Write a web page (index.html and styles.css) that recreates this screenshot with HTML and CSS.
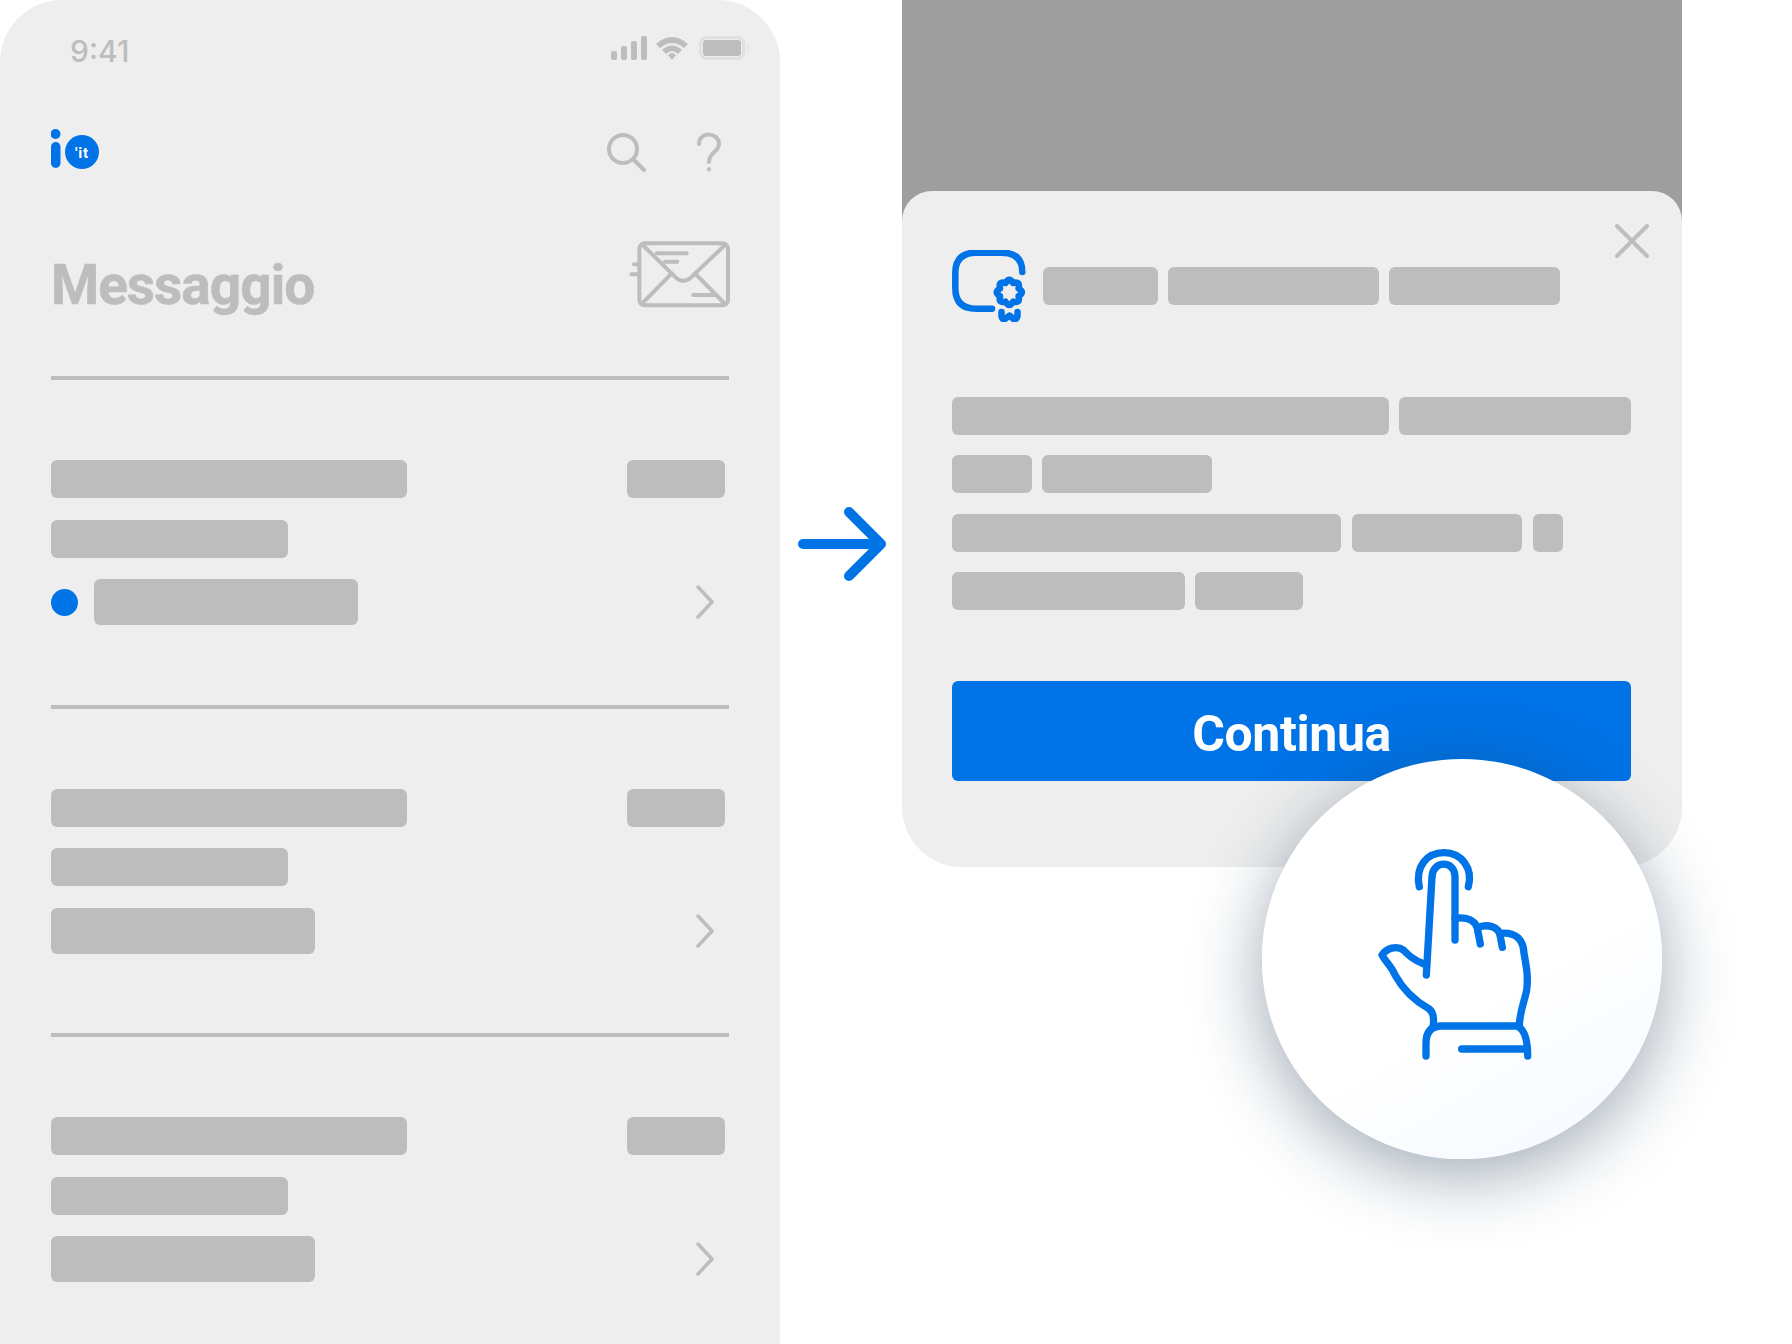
FILE: index.html
```html
<!DOCTYPE html>
<html lang="en">
<head>
    <meta charset="UTF-8">
    <meta name="viewport" content="width=device-width, initial-scale=1.0">
    <title>Messaggio</title>
    <link rel="stylesheet" href="styles.css">
</head>
<body>
    <div class="stage">
        <section class="phone">
            <div class="status-bar">
                <span class="time">9:41</span>
                <svg class="status-icons" viewBox="0 0 140 24" width="140" height="24">
                    <g fill="#bdbdbd">
                        <rect x="1" y="15" width="6" height="9" rx="2"/>
                        <rect x="11" y="10" width="6" height="14" rx="2"/>
                        <rect x="21" y="5" width="6" height="19" rx="2"/>
                        <rect x="31" y="0" width="6" height="24" rx="2"/>
                        <path d="M46 8 Q62 -6 78 8 L74 12 Q62 2 50 12 Z"/>
                        <path d="M52 14 Q62 5 72 14 L68 18 Q62 12 56 18 Z"/>
                        <path d="M58 19 Q62 15 66 19 L62 24 Z"/>
                        <rect x="93" y="4" width="38" height="16" rx="3"/>
                    </g>
                    <path d="M137 8 Q140 12 137 16 Z" fill="#e0e0e0"/>
                    <rect x="90.500" y="1.500" width="43" height="21" rx="6" fill="none" stroke="#e0e0e0" stroke-width="3"/>
                </svg>
            </div>

            <div class="app-bar">
                <svg class="logo" viewBox="0 0 50 44" width="50" height="44">
                    <circle cx="4.500" cy="5" r="5" fill="#0073e6"/>
                    <rect x="0" y="13" width="9.500" height="26" rx="4.700" fill="#0073e6"/>
                    <circle cx="31" cy="23" r="17" fill="#0073e6"/>
                    <text x="31" y="28.500" class="logo-text" text-anchor="middle">'it</text>
                </svg>
                <div class="app-actions">
                    <svg viewBox="0 0 42 42" width="42" height="42" fill="none" stroke="#bdbdbd" stroke-width="4" stroke-linecap="round">
                        <circle cx="17" cy="17" r="14"/>
                        <path d="M28 28 L38 38"/>
                    </svg>
                    <svg viewBox="0 0 28 42" width="28" height="42" fill="none" stroke="#bdbdbd" stroke-width="4" stroke-linecap="round">
                        <path d="M4 12 C4 -1 24 0 24 12 C24 20 14 20 14 30"/>
                        <path d="M14 37 V37.500"/>
                    </svg>
                </div>
            </div>

            <div class="title-row">
                <h1 class="title">Messaggio</h1>
                <svg class="envelope" viewBox="24 30 312 210" width="104" height="70" fill="none" stroke="#bdbdbd" stroke-width="12" stroke-linecap="round" stroke-linejoin="round">
                    <rect x="58" y="40" width="266" height="186" rx="16"/>
                    <path d="M68 45 L170 145 Q190 160 210 145 L315 45"/>
                    <path d="M65 222 L155 130 M315 222 L225 130"/>
                    <path d="M110 70 H200 M135 95 H172 M220 195 H285 M42 103 H52 M34 133 H52"/>
                </svg>
            </div>

            <article class="message">
                <div class="message-top">
                    <span class="bar bar-sender"></span>
                    <span class="bar bar-date"></span>
                </div>
                <span class="bar bar-subject"></span>
                <div class="message-bottom">
                    <span class="unread"></span>
                    <span class="bar bar-preview"></span>
                    <svg class="chevron" viewBox="0 0 18 34" width="18" height="34"><path d="M2 2 L16 17 L2 32"/></svg>
                </div>
            </article>

            <article class="message">
                <div class="message-top">
                    <span class="bar bar-sender"></span>
                    <span class="bar bar-date"></span>
                </div>
                <span class="bar bar-subject"></span>
                <div class="message-bottom">
                    <span class="bar bar-preview"></span>
                    <svg class="chevron" viewBox="0 0 18 34" width="18" height="34"><path d="M2 2 L16 17 L2 32"/></svg>
                </div>
            </article>

            <article class="message">
                <div class="message-top">
                    <span class="bar bar-sender"></span>
                    <span class="bar bar-date"></span>
                </div>
                <span class="bar bar-subject"></span>
                <div class="message-bottom">
                    <span class="bar bar-preview"></span>
                    <svg class="chevron" viewBox="0 0 18 34" width="18" height="34"><path d="M2 2 L16 17 L2 32"/></svg>
                </div>
            </article>
        </section>

        <div class="arrow-col">
            <svg viewBox="0 0 88 74" width="88" height="74" fill="none" stroke="#0073e6" stroke-width="10" stroke-linecap="round" stroke-linejoin="round">
                <path d="M5 37 H82 M51 5 L83 37 L51 69"/>
            </svg>
        </div>

        <section class="sheet-col">
            <div class="sheet">
                <svg class="close" viewBox="0 0 34 34" width="34" height="34" fill="none" stroke="#bdbdbd" stroke-width="4" stroke-linecap="round">
                    <path d="M2 2 L32 32 M32 2 L2 32"/>
                </svg>

                <div class="sheet-head">
                    <svg class="cert" viewBox="22 20 80 72" width="80" height="72" fill="none" stroke="#0073e6" stroke-width="6.500" stroke-linecap="round" stroke-linejoin="round">
                        <path d="M92.300 42 V42 Q92.300 22.700 72 22.700 H46 Q25.300 22.700 25.300 43 V58 Q25.300 78.700 46 78.700 H62"/>
                        <path transform="translate(79.300 62.300)" d="M9.240 -3.830 Q16 0 9.240 3.830 Q11.300 11.300 3.830 9.240 Q0 16 -3.830 9.240 Q-11.300 11.300 -9.240 3.830 Q-16 0 -9.240 -3.830 Q-11.300 -11.300 -3.830 -9.240 Q0 -16 3.830 -9.240 Q11.300 -11.300 9.240 -3.830 Z"/>
                        <path d="M71.500 82 V86 Q72 90 75 89 L79.500 85.500 L83.500 89 Q87 90 87.500 86 V82"/>
                    </svg>
                    <span class="bar bar-h1"></span>
                    <span class="bar bar-h2"></span>
                    <span class="bar bar-h3"></span>
                </div>

                <div class="sheet-text">
                    <div class="line">
                        <span class="bar bar-a"></span>
                        <span class="bar bar-b"></span>
                    </div>
                    <div class="line">
                        <span class="bar bar-c"></span>
                        <span class="bar bar-d"></span>
                    </div>
                    <div class="line line-wide">
                        <span class="bar bar-e"></span>
                        <span class="bar bar-d"></span>
                        <span class="bar bar-f"></span>
                    </div>
                    <div class="line">
                        <span class="bar bar-g"></span>
                        <span class="bar bar-i"></span>
                    </div>
                </div>

                <button class="continue" type="button">Continua</button>

                <div class="touch">
                    <svg viewBox="0 0 540 690" width="180" height="230" fill="none" stroke="#0073e6" stroke-width="22" stroke-linecap="round" stroke-linejoin="round">
                        <path d="M178 140 C165 80 200 38 252 38 C305 38 340 85 325 140"/>
                        <path d="M199 405 L216 110 C218 60 285 60 285 110 L285 300"/>
                        <path d="M285 235 C320 230 345 240 352 265 L361 312"/>
                        <path d="M355 262 C385 250 415 262 420 285 L427 322"/>
                        <path d="M420 280 C470 275 490 300 492 340 C500 385 505 410 500 450 C495 480 480 510 478 555"/>
                        <path d="M192 372 C160 360 145 345 130 330 C110 315 80 325 66 345 C80 370 95 380 105 405 C130 450 160 480 205 505 C220 515 222 530 220 560"/>
                        <path d="M198 648 L198 610 C198 575 215 560 240 558 L470 558 C490 565 503 590 503 648"/>
                        <path d="M305 627 L500 627"/>
                    </svg>
                </div>
            </div>
        </section>
    </div>
</body>
</html>
```

FILE: styles.css
```css
html, body {
    margin: 0;
    background-color: #ffffff;
}

.stage {
    display: flex;
    width: 1792px;
    height: 1344px;
    overflow: hidden;
}

svg {
    display: block;
}

/* left phone */
.phone {
    width: 780px;
    height: 1344px;
    flex: none;
    box-sizing: border-box;
    padding: 36px 51px 0 51px;
    background-color: #eeeeee;
    border-radius: 62px 62px 0 0;
}

.status-bar {
    display: flex;
    justify-content: space-between;
    align-items: center;
    height: 24px;
    padding-left: 19px;
}

.time {
    font-family: "Inter", sans-serif;
    font-weight: 500;
    font-size: 30px;
    line-height: 30px;
    color: #bdbdbd;
    padding-top: 6px;
}

.status-icons {
    margin-right: -21px;
}

.app-bar {
    display: flex;
    justify-content: space-between;
    align-items: flex-start;
    margin-top: 69px;
}

.logo-text {
    font-family: "Roboto", sans-serif;
    font-weight: 700;
    font-size: 15px;
    letter-spacing: 0.800px;
    fill: #ffffff;
}

.app-actions {
    display: flex;
    gap: 47px;
    margin-top: 3px;
    margin-right: 6px;
}

.title-row {
    display: flex;
    justify-content: space-between;
    align-items: flex-start;
    margin-top: 66px;
    height: 136px;
    border-bottom: 4px solid #bdbdbd;
}

.title {
    margin: 13px 0 0;
    font-family: "Roboto", sans-serif;
    font-weight: 700;
    font-size: 55px;
    line-height: 64px;
    letter-spacing: -1px;
    color: #bdbdbd;
    -webkit-text-stroke: 0.600px #bdbdbd;
}

.envelope {
    margin-right: -3px;
}

.message {
    display: flex;
    flex-direction: column;
    gap: 21.500px;
    height: 328.500px;
    box-sizing: border-box;
    padding: 80px 0 0;
    border-bottom: 4px solid #bdbdbd;
}

.message:last-child {
    border-bottom: none;
}

.message-top {
    display: flex;
    justify-content: space-between;
    padding-right: 4px;
}

.message-bottom {
    display: flex;
    align-items: center;
    gap: 16px;
    padding-right: 15px;
}

.message-bottom .chevron {
    margin-left: auto;
}

.chevron path {
    fill: none;
    stroke: #bdbdbd;
    stroke-width: 3.500;
    stroke-linecap: round;
    stroke-linejoin: round;
}

.unread {
    width: 27px;
    height: 27px;
    border-radius: 50%;
    background-color: #0073e6;
}

/* skeleton bars */
.bar {
    display: block;
    flex: none;
    height: 38px;
    border-radius: 6px;
    background-color: #bdbdbd;
}

.bar-sender { width: 356px; }
.bar-date { width: 98px; }
.bar-subject { width: 237px; }
.bar-preview { width: 264px; height: 46px; }

.bar-h1 { width: 115px; }
.bar-h2 { width: 211px; }
.bar-h3 { width: 171px; }

.bar-a { width: 437px; }
.bar-b { width: 232px; }
.bar-c { width: 80px; }
.bar-d { width: 170px; }
.bar-e { width: 389px; }
.bar-f { width: 30px; }
.bar-g { width: 233px; }
.bar-i { width: 108px; }

/* arrow between the two screens */
.arrow-col {
    width: 122px;
    flex: none;
    box-sizing: border-box;
    padding: 507px 0 0 18px;
}

/* right screen */
.sheet-col {
    width: 780px;
    height: 867px;
    flex: none;
    box-sizing: border-box;
    padding-top: 191px;
    background: linear-gradient(#9e9e9e 220px, #ffffff 220px);
}

.sheet {
    position: relative;
    height: 676px;
    box-sizing: border-box;
    padding: 59px 51px 0 50px;
    background-color: #eeeeee;
    border-radius: 30px 30px 60px 60px;
}

.close {
    position: absolute;
    top: 33px;
    right: 33px;
}

.sheet-head {
    display: flex;
    gap: 10px;
    height: 72px;
}

.sheet-head .bar {
    margin-top: 17px;
}

.sheet-head .cert {
    margin-right: 1px;
}

.sheet-text {
    display: flex;
    flex-direction: column;
    gap: 20px;
    margin-top: 75px;
}

.line {
    display: flex;
    gap: 10px;
}

.line-wide {
    gap: 11px;
    margin-top: 1px;
}

.continue {
    display: block;
    width: 100%;
    height: 100px;
    margin-top: 71px;
    padding: 6px 0 0;
    border: none;
    border-radius: 6px;
    background-color: #0073e6;
    color: #ffffff;
    font-family: "Roboto", sans-serif;
    font-weight: 700;
    font-size: 50px;
    letter-spacing: -0.400px;
}

.touch {
    position: absolute;
    left: 360px;
    top: 568px;
    width: 400px;
    height: 400px;
    display: flex;
    align-items: center;
    justify-content: center;
    border-radius: 50%;
    background: linear-gradient(150deg, #ffffff 58%, #f3f8ff 100%);
    box-shadow: 0 16px 70px rgba(23, 50, 77, 0.42);
}

.touch svg {
    margin: 0 24px 8px 0;
}
```
